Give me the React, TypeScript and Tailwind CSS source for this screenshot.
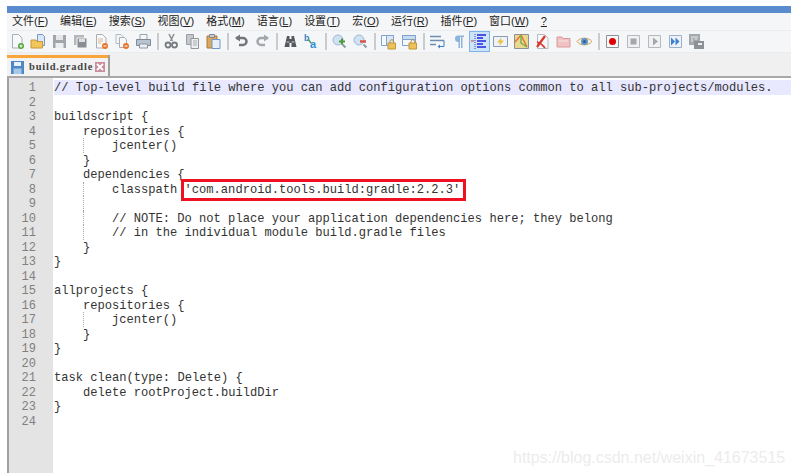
const menus = [
  ["文件", "F"],
  ["编辑", "E"],
  ["搜索", "S"],
  ["视图", "V"],
  ["格式", "M"],
  ["语言", "L"],
  ["设置", "T"],
  ["宏", "O"],
  ["运行", "R"],
  ["插件", "P"],
  ["窗口", "W"],
]

const code = [
  "// Top-level build file where you can add configuration options common to all sub-projects/modules.",
  "",
  "buildscript {",
  "    repositories {",
  "        jcenter()",
  "    }",
  "    dependencies {",
  "        classpath 'com.android.tools.build:gradle:2.2.3'",
  "",
  "        // NOTE: Do not place your application dependencies here; they belong",
  "        // in the individual module build.gradle files",
  "    }",
  "}",
  "",
  "allprojects {",
  "    repositories {",
  "        jcenter()",
  "    }",
  "}",
  "",
  "task clean(type: Delete) {",
  "    delete rootProject.buildDir",
  "}",
  "",
]

// lines that show the dotted indent guide
const guided = [5, 8, 9, 10, 11, 17]

const Svg = ({ children }: { children: React.ReactNode }) => (
  <svg width="17" height="17" viewBox="0 0 17 17" fill="none">
    {children}
  </svg>
)

const Doc = ({ stroke = "#a9aeb5" }: { stroke?: string }) => (
  <path d="M3.5 1.5h6l3.5 3.5v10h-9.5z" fill="#f7f8fa" stroke={stroke} />
)

const Badge = ({ c }: { c: string }) => <circle cx="12" cy="13" r="3" fill={c} />

const icons: React.ReactNode[] = [
  <Svg><Doc /><Badge c="#55a63c" /><path d="M10.5 13h3M12 11.5v3" stroke="#fff" /></Svg>,
  <Svg>
    <path d="M7.5 1.5h5l2 2v9h-7z" fill="#dbe7f6" stroke="#6f97c9" />
    <path d="M1 7h5l1 1.5h5.5v6.5H1z" fill="#f2c65a" stroke="#c8963a" />
  </Svg>,
  <Svg>
    <path d="M2 2h13v13H2z" fill="#a2a6ab" />
    <path d="M5 2h7v5H5z" fill="#e4e6e9" />
    <path d="M4.500 10h8v5h-8z" fill="#eceef0" />
  </Svg>,
  <Svg>
    <path d="M2 2h10v10H2z" fill="#b4b7bb" />
    <path d="M5 5h10v10H5z" fill="#8a8e94" stroke="#f5f6f7" />
    <path d="M7 6h6v3H7z" fill="#dfe2e5" />
  </Svg>,
  <Svg><Doc /><path d="M5 6h5M5 8h5M5 10h3" stroke="#e3b58c" /><Badge c="#e8742a" /><path d="M10.500 13h3" stroke="#fff" /></Svg>,
  <Svg>
    <path d="M2 1.500h5l2 2v7H2z" fill="#f2f4f6" stroke="#b5bac0" />
    <path d="M5.500 4.500h5l2 2v8h-7z" fill="#f7f8fa" stroke="#a9aeb5" />
    <Badge c="#e8742a" /><path d="M10.500 13h3" stroke="#fff" />
  </Svg>,
  <Svg>
    <path d="M5 1.500h7v5H5z" fill="#f4f6f8" stroke="#9aa2ab" />
    <path d="M1.500 6.500h14v6h-14z" fill="#b8c2d0" stroke="#7f8a98" />
    <path d="M4.500 11h8v4h-8z" fill="#eef1f4" stroke="#8a939e" />
  </Svg>,
  <Svg>
    <path d="M11 1L7.500 8M6 1l3.500 7" stroke="#8a8e94" strokeWidth="1.500" />
    <circle cx="5" cy="12" r="2.500" stroke="#777b81" strokeWidth="1.800" />
    <circle cx="11.500" cy="12" r="2.500" stroke="#777b81" strokeWidth="1.800" />
  </Svg>,
  <Svg>
    <path d="M2.500 1.500h7v10h-7z" fill="#c4c7cb" stroke="#9a9ea4" />
    <path d="M7 5.500h7.500v10H7z" fill="#eceef0" stroke="#92969c" />
    <path d="M9 8h4M9 10h4M9 12h4" stroke="#a6abb0" />
  </Svg>,
  <Svg>
    <path d="M2 3h10v12H2z" fill="#dca95c" stroke="#a97a36" />
    <path d="M4.500 1.500h5v3h-5z" fill="#c9ccd0" stroke="#85898e" />
    <path d="M7 6.500h8v9H7z" fill="#e7f0fa" stroke="#6f97c9" />
  </Svg>,
  <Svg><path d="M3 5h7a3.500 3.500 0 0 1 0 7H6" stroke="#71767c" strokeWidth="2.500" /><path d="M7 1.500v7L2 5z" fill="#71767c" /></Svg>,
  <Svg><path d="M14 5H7a3.500 3.500 0 0 0 0 7h4" stroke="#a3a7ac" strokeWidth="2.500" /><path d="M10 1.500v7L15 5z" fill="#a3a7ac" /></Svg>,
  <Svg>
    <path d="M5 3h2.500v3h2V3H12l2.500 11h-5V10h-2v4h-5z" fill="#55595f" />
    <path d="M4.500 8h3v2h-3zM9.500 8h3v2h-3z" fill="#8d9298" />
  </Svg>,
  <Svg>
    <text x="1" y="8" fontFamily="Liberation Sans" fontSize="9" fontWeight="700" fill="#3d7fc4">b</text>
    <text x="7" y="15" fontFamily="Liberation Sans" fontSize="11" fontWeight="700" fill="#2f8fd0">a</text>
    <path d="M5 6l3 4" stroke="#4aa06a" strokeWidth="1.500" />
  </Svg>,
  <Svg>
    <circle cx="7" cy="7" r="5" fill="#cfe2f4" stroke="#9fb9d2" />
    <path d="M11.500 11.500l3 3" stroke="#8d9aa6" strokeWidth="2" />
    <path d="M8 8.500h6M11 5.500v6" stroke="#4d9a3c" strokeWidth="2" />
  </Svg>,
  <Svg>
    <circle cx="7" cy="7" r="5" fill="#cfe2f4" stroke="#9fb9d2" />
    <path d="M11.500 11.500l3 3" stroke="#8d9aa6" strokeWidth="2" />
    <path d="M8 8.500h6" stroke="#d9534a" strokeWidth="2.500" />
  </Svg>,
  <Svg>
    <path d="M1.500 2.500h12v10h-12z" fill="#f5f8fc" stroke="#7fa3cc" />
    <path d="M6.500 2.500h7v10h-7z" fill="#dbe7f6" stroke="#7fa3cc" />
    <path d="M8 10h7.500v6H8z" fill="#eec257" stroke="#c2963c" />
    <path d="M10 10V8.500a1.800 1.800 0 0 1 3.600 0V10" stroke="#b7913f" />
  </Svg>,
  <Svg>
    <path d="M1.500 2.500h13v10h-13z" fill="#f5f8fc" stroke="#7fa3cc" />
    <path d="M1.500 2.500h13v4h-13z" fill="#c7daf0" stroke="#7fa3cc" />
    <path d="M8 10h7.500v6H8z" fill="#eec257" stroke="#c2963c" />
    <path d="M10 10V8.500a1.800 1.800 0 0 1 3.600 0V10" stroke="#b7913f" />
  </Svg>,
  <Svg>
    <path d="M1 3.500h11M1 7.500h14M1 11.500h6" stroke="#6f8db3" strokeWidth="1.500" />
    <path d="M15 7.500v6H10" stroke="#3d7fc4" />
    <path d="M11 11.500v4l-2.500-2z" fill="#3d7fc4" />
  </Svg>,
  <Svg>
    <path d="M8 2.500H14v1.500h-1.500v11H11V4h-1v11H8.500V9A3.200 3.200 0 0 1 8 2.500z" fill="#8db4dc" />
  </Svg>,
  <Svg>
    <path d="M4 1v15" stroke="#3a3ad0" strokeDasharray="1 1" />
    <path d="M6 2h9M6 5h6M6 8h9M6 11h6M6 14h9" stroke="#2323e0" strokeWidth="1.300" />
    <path d="M0 8h3" stroke="#d04040" />
  </Svg>,
  <Svg>
    <path d="M1.500 3.500h14v10h-14z" fill="#eef3fa" stroke="#8a9cb3" />
    <path d="M9.500 4.500L5 9.500h3l-1 3.500 5-5.500H9z" fill="#eec03c" />
  </Svg>,
  <Svg>
    <path d="M1.500 1.500h14v14h-14z" fill="#e9d98a" stroke="#8d9298" />
    <path d="M2 9l6-7 6 12" stroke="#e0763a" strokeWidth="1.500" />
    <path d="M8 2v8l6 4" stroke="#78b05a" strokeWidth="1.500" />
  </Svg>,
  <Svg>
    <path d="M3.500 1.500h7l3.500 3.500v10.500h-10.500z" fill="#f7f8fa" stroke="#b5bac0" />
    <path d="M3 14L11 3" stroke="#d8382e" strokeWidth="2.200" />
    <path d="M3 9c3 1 6 3 8 6" stroke="#d8382e" strokeWidth="1.500" />
  </Svg>,
  <Svg>
    <path d="M2 4h5l1 1.500h7V14H2z" fill="#efc3c3" stroke="#dc9a9a" />
    <path d="M4 8h9" stroke="#f7e4e4" />
  </Svg>,
  <Svg>
    <path d="M1 8.500C4 4 12.500 4 16 8.500C12.500 13 4 13 1 8.500z" fill="#f7f1e2" stroke="#d4a868" />
    <circle cx="8.500" cy="8.500" r="3.500" fill="#5f95c8" />
    <circle cx="8.500" cy="8.500" r="1.500" fill="#2f5f92" />
  </Svg>,
]

const macro: React.ReactNode[] = [
  <Svg><path d="M2.500 2.500h12v12h-12z" fill="#f7f8fa" stroke="#8d9298" /><circle cx="8.500" cy="8.500" r="3.500" fill="#e00000" /></Svg>,
  <Svg><path d="M2.500 2.500h12v12h-12z" fill="#f0f1f2" stroke="#b5b8bc" /><path d="M5.500 5.500h6v6h-6z" fill="#a4a7ab" /></Svg>,
  <Svg><path d="M2.500 2.500h12v12h-12z" fill="#f0f1f2" stroke="#b5b8bc" /><path d="M7 4.500l5 4-5 4z" fill="#a4a7ab" /></Svg>,
  <Svg><path d="M2.500 2.500h12v12h-12z" fill="#eef2f8" stroke="#9db0c6" /><path d="M4 4.500l4 4-4 4zM8.500 4.500l4 4-4 4z" fill="#3b7fd0" /></Svg>,
  <Svg>
    <path d="M1 1h11v11H1z" fill="#a4a7ab" />
    <path d="M3 4h7M3 6h2M3 8h2M6.500 6h3" stroke="#eceef0" />
    <path d="M6 8h10v8H6z" fill="#8d9094" />
    <path d="M10 10h4v2h-4z" fill="#eceef0" />
  </Svg>,
]

const Sep = () => (
  <div className="flex w-[7px] justify-center">
    <div className="h-[17px] w-[2px] bg-[#c9cbcd]" />
  </div>
)

const seps: Record<number, boolean> = { 7: true, 10: true, 12: true, 14: true, 16: true, 18: true }

const App = () => {
  return (
    <div className="relative h-[473px] w-[793px] overflow-hidden bg-white pl-[7px] pr-[2px] pt-[6px] font-['Liberation_Mono',monospace]">
      <div className="h-[7px] bg-[#5a8bcf]" />

      <div className="flex h-[17px] items-center gap-[12px] bg-[#f5f6f7] pl-[5px] font-['Liberation_Sans','Noto_Sans_CJK_SC',sans-serif] text-[11px] text-[#222]">
        {menus.map(([name, key]) => (
          <span key={key} className="whitespace-nowrap">
            {name}(<span className="underline">{key}</span>)
          </span>
        ))}
        <span className="underline">?</span>
      </div>

      <div className="flex h-[23px] items-center border-t border-b border-[#ebecee] bg-[#f5f6f7]">
        {icons.map((icon, i) => (
          <div key={i} className="contents">
            {seps[i] && <Sep />}
            <div
              className={
                i === 20
                  ? "flex h-[21px] w-[21px] items-center justify-center border border-[#7eb4ea] bg-[#cde4f7]"
                  : "flex h-[21px] w-[21px] items-center justify-center"
              }
            >
              {icon}
            </div>
          </div>
        ))}
        <Sep />
        {macro.map((icon, i) => (
          <div key={i} className="flex h-[21px] w-[21px] items-center justify-center">
            {icon}
          </div>
        ))}
      </div>

      <div className="flex h-[25px] items-end border-b-2 border-[#a8a8a8] bg-[#f0f0f0]">
        <div className="flex h-[21px] w-[103px] flex-col border-r-2 border-[#a0a0a0] bg-[#f2f2f2]">
          <div className="h-[3px] bg-[#f9a53a]" />
          <div className="flex flex-1 items-center pl-[4px]">
            <svg width="13" height="13" viewBox="0 0 13 13" className="shrink-0">
              <path d="M0 0h13v13H0z" fill="#4f86c6" />
              <path d="M3 1h7v4H3z" fill="#e8f0f8" />
              <path d="M2.500 7.500h8V13h-8z" fill="#a9c8e8" />
            </svg>
            <span className="ml-[5px] w-[66px] whitespace-nowrap font-['Liberation_Serif',serif] text-[10.500px] font-bold tracking-[0.8px] text-[#444]">
              build.gradle
            </span>
            <div className="flex h-[10px] w-[10px] items-center justify-center bg-[#c98d9e]">
              <svg width="8" height="8" viewBox="0 0 8 8">
                <path d="M1 1l6 6M7 1L1 7" stroke="#fff" strokeWidth="1.800" />
              </svg>
            </div>
          </div>
        </div>
      </div>

      <div className="flex h-[395px] border-l-2 border-[#a0a0a0]">
        <div className="w-[44px] shrink-0 bg-[#e4e4e4] pt-[2px] pr-[17px] text-right text-[12px] text-[#808080]">
          {code.map((_, i) => (
            <div key={i} className="h-[14.520px] leading-[16px]">
              {i + 1}
            </div>
          ))}
        </div>
        <div className="min-w-0 flex-1 pt-[2px] pl-[1px] text-[12.100px] text-[#333]">
          {code.map((line, i) => {
            const text = line.trimStart()
            const indent = line.length - text.length
            return (
              <div
                key={i}
                className={
                  i === 0
                    ? "flex h-[14.520px] whitespace-pre bg-[#e8e8ff] leading-[16px]"
                    : "flex h-[14.520px] whitespace-pre leading-[16px]"
                }
              >
                {indent === 4 && <span className="w-[29px]" />}
                {indent === 8 && <span className="w-[29px]" />}
                {guided.includes(i + 1) && indent === 0 && <span className="w-[29px]" />}
                {guided.includes(i + 1) && (
                  <span className="h-[14.520px] w-[29px] border-l border-dotted border-[#a8a8a8]" />
                )}
                {indent === 8 && !guided.includes(i + 1) && <span className="w-[29px]" />}
                <span>{text}</span>
              </div>
            )
          })}
        </div>
      </div>

      {/* red marker drawn on top of the screenshot */}
      <div className="absolute left-[181px] top-[179px] h-[22px] w-[285px] border-[3px] border-[#ee1122]" />

      <div className="absolute left-[513px] top-[446px] font-['Liberation_Sans',sans-serif] text-[16px] text-[#ececec]">
        https://blog.csdn.net/weixin_41673515
      </div>
    </div>
  )
}

export default App
